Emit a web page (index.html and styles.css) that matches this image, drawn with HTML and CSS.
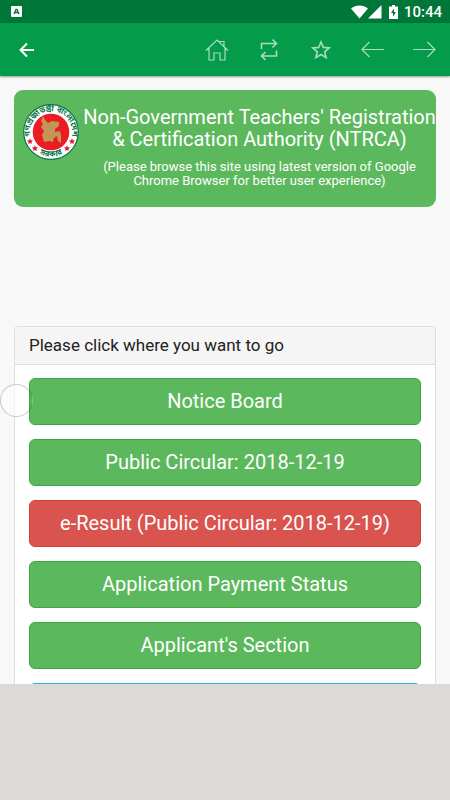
FILE: index.html
```html
<!DOCTYPE html>
<html lang="en">
<head>
<meta charset="utf-8">
<meta name="viewport" content="width=device-width, initial-scale=1">
<title>NTRCA</title>
<link rel="stylesheet" href="styles.css">
</head>
<body>
<div class="status">
  <svg class="status-app" width="11" height="11" viewBox="0 0 11 11" aria-hidden="true"><rect width="11" height="11" rx="1" fill="#fff"/><path d="M3 8 5 3.500h1L8 8M4 6.500h3" fill="none" stroke="#007638" stroke-width="1.300"/></svg>
  <div class="status-right">
    <svg width="17" height="14" viewBox="0 0 17 14" aria-hidden="true"><path d="M0 3.500C5-.6 12-.6 17 3.500L8.500 13.500Z" fill="#fff"/></svg>
    <svg width="14" height="14" viewBox="0 0 14 14" aria-hidden="true"><path d="M13.500 0v13.500H0Z" fill="#fff"/></svg>
    <svg class="battery" width="9" height="14" viewBox="0 0 9 14" aria-hidden="true"><path d="M3 0h3v1.500h3V14H0V1.500h3Z" fill="#fff"/><path d="M5 3.500 2 8h2v3.500L7 7H5Z" fill="#007638"/></svg>
    <span>10:44</span>
  </div>
</div>
<nav class="toolbar">
  <button class="tool back" aria-label="Back"><svg width="16" height="16" viewBox="0 0 16 16"><path d="M15 8H2M8 1.500 1.500 8 8 14.500" stroke-width="2"/></svg></button>
  <div class="tools">
    <button class="tool" aria-label="Home"><svg width="24" height="24" viewBox="0 0 24 24"><path d="M1 12.500 12 2 23 12.500M4 10v12h5v-7h6v7h5V10M15 5V3.500h4v5"/></svg></button>
    <button class="tool" aria-label="Reload"><svg width="24" height="24" viewBox="0 0 24 24"><path d="M4.500 11V5.500h15M15.500 1.500l4 4-4 4M19.500 12.500V18H4.500M8.500 14l-4 4 4 4" stroke-width="1.600"/></svg></button>
    <button class="tool" aria-label="Favourite"><svg width="24" height="24" viewBox="0 0 24 24"><path d="m12 4 2.300 5.400 5.900.5-4.500 3.900 1.400 5.700-5.100-3-5.100 3 1.400-5.700-4.500-3.900 5.900-.5Z" stroke-width="1.600"/></svg></button>
    <button class="tool" aria-label="Previous page"><svg width="24" height="24" viewBox="0 0 24 24"><path d="M23 11.500H1M8.500 4 1 11.500 8.500 19"/></svg></button>
    <button class="tool" aria-label="Next page"><svg width="24" height="24" viewBox="0 0 24 24"><path d="M0 11.500h22M14.500 4l7.500 7.500-7.500 7.500"/></svg></button>
  </div>
</nav>
<main class="page">
  <header class="banner">
    <svg class="seal" width="56" height="56" viewBox="0 0 56 56" role="img" aria-label="Government seal">
      <defs><path id="top" d="M8.500 36A21 21 0 1 1 47.500 36"/><path id="bottom" d="M13 47.500A25 25 0 0 0 43 47.500"/></defs>
      <circle cx="28" cy="28" r="27.300" fill="#fff" stroke="#087849" stroke-width="1.200"/>
      <circle cx="28" cy="28" r="18.300" fill="#ec1c24"/>
      <path d="m20 12 2 4 3 3 4-2 7 1v4l-4 3v3l5-1 1 4v8l-3-2-1-5-3 2-1 4-4-1-5 1-2-7 2-4-3-4 2-3-2-3Z" fill="#c29657"/>
      <g class="seal-text"><text><textPath href="#top" startOffset="50%">গণপ্রজাতন্ত্রী বাংলাদেশ</textPath></text><text><textPath href="#bottom" startOffset="50%">সরকার</textPath></text></g>
      <g fill="#e51b2d"><path id="star" d="m7 34.300.9 1.900 2.100.3-1.500 1.500.4 2.100L7 39.100l-1.900 1 .4-2.100L4 36.500l2.100-.3Z"/><use href="#star" x="5" y="7"/><use href="#star" x="42"/><use href="#star" x="37" y="7"/></g>
    </svg>
    <div class="banner-text">
      <h1>Non-Government Teachers' Registration<br>&amp; Certification Authority (NTRCA)</h1>
      <p>(Please browse this site using latest version of Google<br>Chrome Browser for better user experience)</p>
    </div>
  </header>
  <section class="panel">
    <h2>Please click where you want to go</h2>
    <div class="links">
      <a href="#">Notice Board</a>
      <a href="#">Public Circular: 2018-12-19</a>
      <a class="danger" href="#">e-Result (Public Circular: 2018-12-19)</a>
      <a href="#">Application Payment Status</a>
      <a href="#">Applicant's Section</a>
      <a class="info" href="#"></a>
    </div>
    <span class="handle"></span>
  </section>
</main>
<footer class="ad-space"></footer>
</body>
</html>
```
FILE: styles.css
```css
* { box-sizing: border-box; }
body {
  margin: 0;
  height: 100vh;
  display: flex;
  flex-direction: column;
  overflow: hidden;
  background: #f8f8f8;
  font-family: Roboto, "Liberation Sans", sans-serif;
}
.status {
  flex: none;
  height: 23px;
  padding: 0 8px 0 11px;
  display: flex;
  align-items: center;
  justify-content: space-between;
  background: #007638;
  color: #fff;
  font-size: 15px;
  font-weight: 500;
}
.status-right { display: flex; align-items: center; }
.battery { margin: 0 6px 0 7px; }
.toolbar {
  flex: none;
  height: 53px;
  padding: 0 13px 0 16px;
  display: flex;
  align-items: center;
  justify-content: space-between;
  background: #049b4b;
  box-shadow: 0 1px 2px #0006;
  z-index: 1;
}
.tools { display: flex; gap: 28px; }
.tool {
  padding: 0;
  border: 0;
  background: none;
  width: 24px;
  height: 24px;
  display: flex;
  align-items: center;
  justify-content: center;
}
.tool svg { fill: none; stroke: #a9dbc0; stroke-width: 1.2; }
.tool.back { width: 22px; }
.tool.back svg { stroke: #fff; }
.page {
  flex: 1;
  min-height: 0;
  padding: 14px 14px 0;
  overflow: hidden;
}
.banner {
  display: flex;
  gap: 4px;
  min-height: 117px;
  padding: 14px 0 0 9px;
  border-radius: 9px;
  background: #5cb85c;
  color: #fff;
}
.seal { flex: none; }
.seal-text {
  fill: #087849;
  font-family: "Noto Sans Bengali", "Noto Sans", sans-serif;
  font-size: 8px;
  font-weight: 700;
  text-anchor: middle;
}
.banner-text {
  flex: 1;
  display: flex;
  flex-direction: column;
  align-items: center;
  padding-top: 2px;
  text-align: center;
  white-space: nowrap;
}
h1 { margin: 0 0 10px; font-size: 20px; line-height: 22px; font-weight: 400; }
.banner p { margin: 0; font-size: 13px; line-height: 14px; }
.panel {
  position: relative;
  margin-top: 119px;
  border: 1px solid #ddd;
  border-radius: 4px;
  background: #fff;
}
h2 {
  margin: 0;
  padding: 8px 14px;
  border-bottom: 1px solid #ddd;
  border-radius: 4px 4px 0 0;
  background: #f5f5f5;
  color: #222;
  font-size: 17px;
  line-height: 21px;
  font-weight: 400;
}
.links { display: flex; flex-direction: column; gap: 14px; padding: 13px 14px; }
.links a {
  height: 47px;
  border: 1px solid #3ca73f;
  border-radius: 6px;
  background: #5cb85c;
  color: #fff;
  font-size: 20px;
  line-height: 44px;
  text-align: center;
  text-decoration: none;
}
.links .danger { background: #d9534f; border-color: #d43f3a; }
.links .info { background: #5bc0de; border-color: #28b2d5; }
.handle {
  position: absolute;
  left: -15px;
  top: 57px;
  width: 33px;
  height: 33px;
  border: 1px solid #0003;
  border-radius: 50%;
  background: linear-gradient(90deg, #fff9 88%, #fff0 88%);
}
.ad-space { flex: none; height: 116px; background: #dbdad8; }
```
